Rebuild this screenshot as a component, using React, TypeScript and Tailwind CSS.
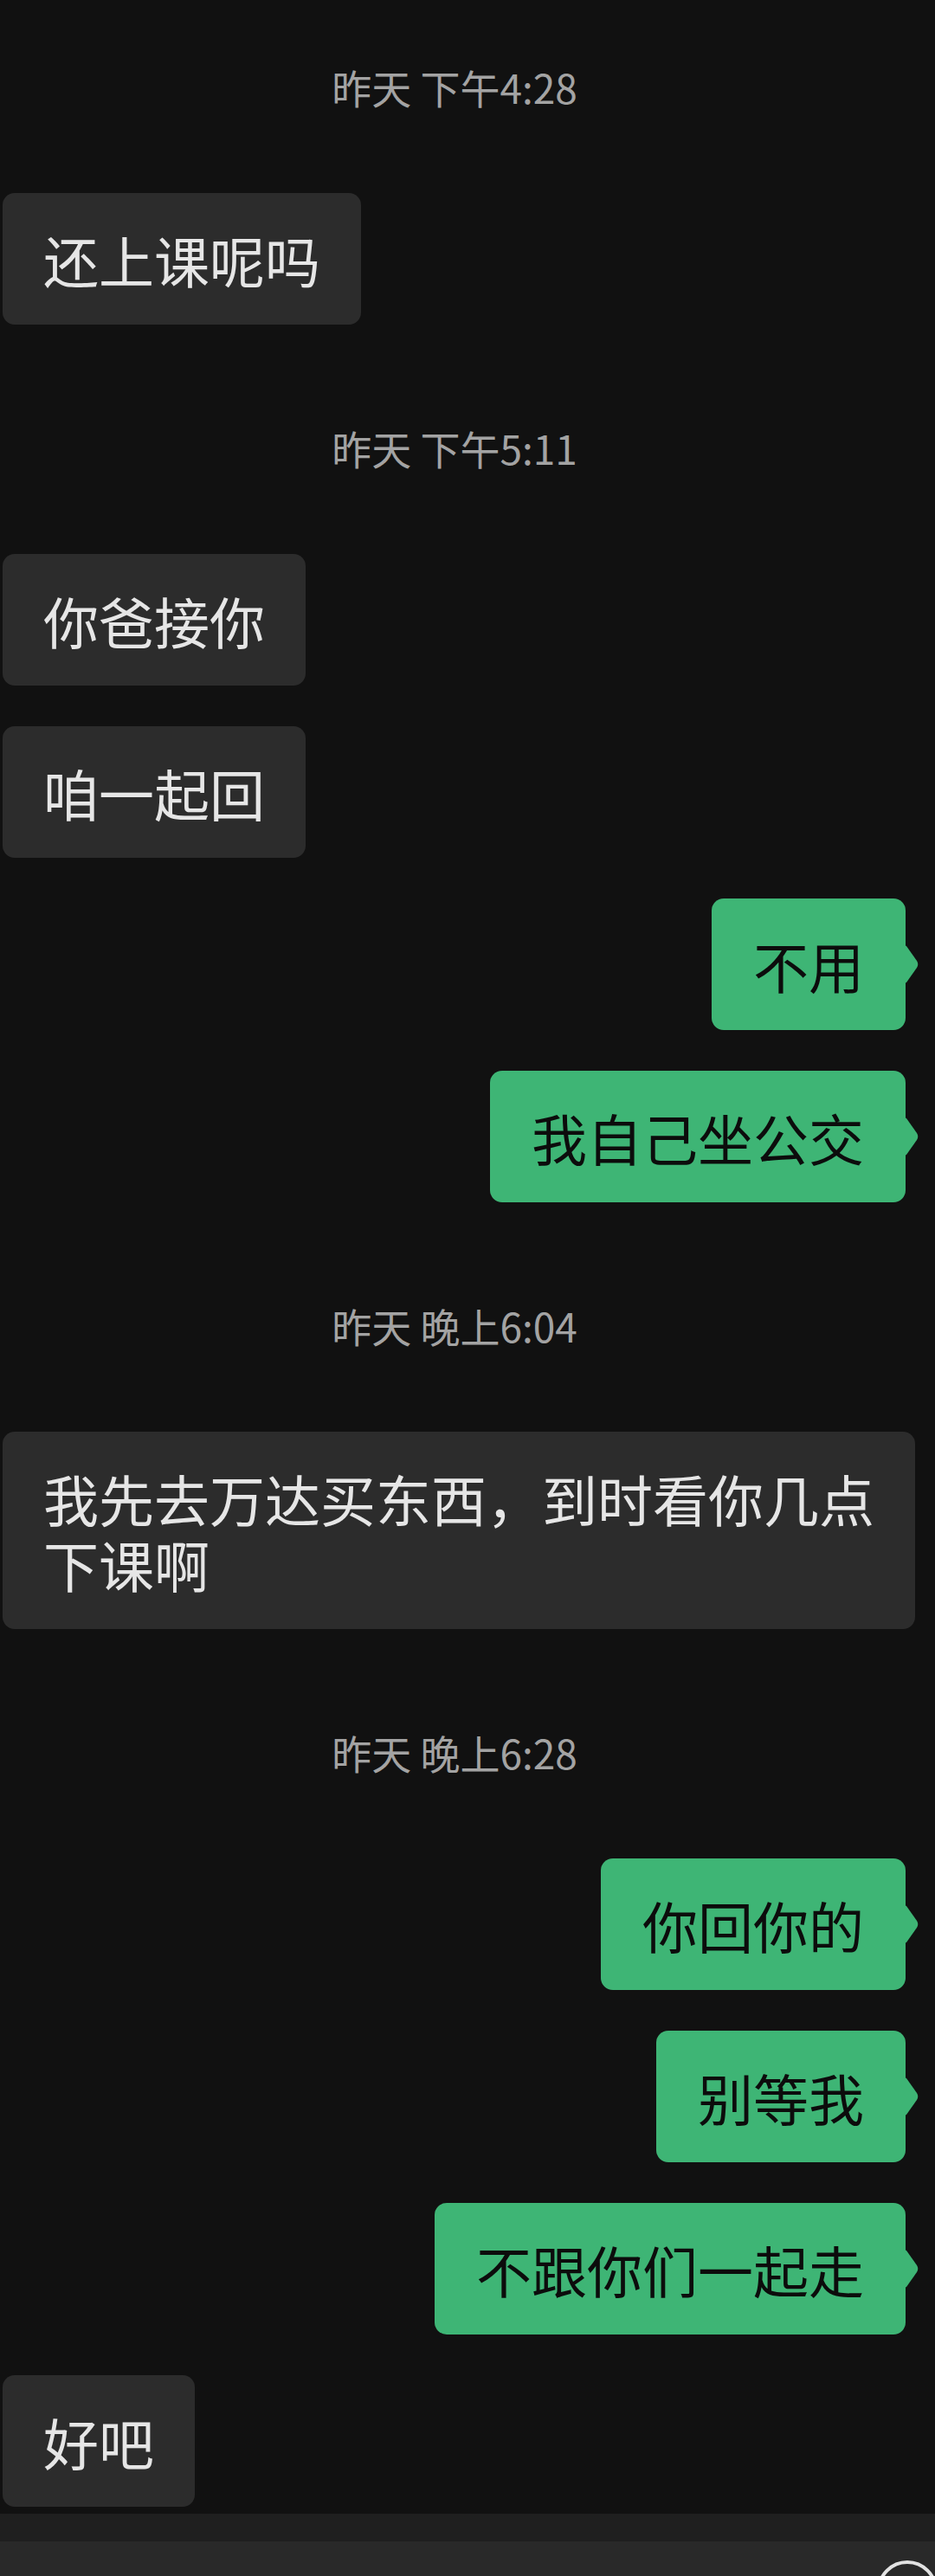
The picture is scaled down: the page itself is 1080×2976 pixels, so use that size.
import React from 'react';

type Item =
  | { kind: 'time'; text: string; first?: boolean }
  | { kind: 'in'; text: string; first?: boolean }
  | { kind: 'out'; text: string; first?: boolean };

const items: Item[] = [
  { kind: 'time', text: '昨天 下午4:28', first: true },
  { kind: 'in', text: '还上课呢吗', first: true },
  { kind: 'time', text: '昨天 下午5:11' },
  { kind: 'in', text: '你爸接你', first: true },
  { kind: 'in', text: '咱一起回' },
  { kind: 'out', text: '不用' },
  { kind: 'out', text: '我自己坐公交' },
  { kind: 'time', text: '昨天 晚上6:04' },
  { kind: 'in', text: '我先去万达买东西，到时看你几点下课啊', first: true },
  { kind: 'time', text: '昨天 晚上6:28' },
  { kind: 'out', text: '你回你的', first: true },
  { kind: 'out', text: '别等我' },
  { kind: 'out', text: '不跟你们一起走' },
  { kind: 'in', text: '好吧' },
];

const Tail = () => (
  <svg
    className="absolute right-[-16px] top-1/2 -translate-y-1/2"
    width="17"
    height="44"
    viewBox="0 0 17 44"
  >
    <path d="M0 0 L2 1 L14 18 Q16.5 22 14 26 L2 43 L0 44 Z" fill="#3eb575" />
  </svg>
);

const TimeStamp = ({ text, first }: { text: string; first?: boolean }) => (
  <div
    className={
      (first ? 'mt-0 ' : 'mt-[112px] ') +
      'mb-[93px] h-[60px] pr-[30px] text-center text-[46px] leading-[60px] text-[#a3a3a3]'
    }
  >
    {text}
  </div>
);

const Incoming = ({ text, first }: { text: string; first?: boolean }) => (
  <div className={(first ? '' : 'mt-[47px] ') + 'flex justify-start pl-[3px]'}>
    <div className="max-w-[1054px] rounded-[14px] bg-[#2c2c2c] px-[47px] py-[38px] text-[64px] leading-[76px] text-[#e6e6e6]">
      {text}
    </div>
  </div>
);

const Outgoing = ({ text, first }: { text: string; first?: boolean }) => (
  <div className={(first ? '' : 'mt-[47px] ') + 'flex justify-end pr-[34px]'}>
    <div className="relative max-w-[900px] rounded-[14px] bg-[#3eb575] px-[48px] py-[38px] text-[64px] leading-[76px] text-[#0c0c0c]">
      {text}
      <Tail />
    </div>
  </div>
);

export default function App() {
  return (
    <div className="flex h-[2976px] w-[1080px] flex-col overflow-hidden bg-[#111111] font-['Noto_Sans_CJK_SC','Noto_Sans',sans-serif]">
      <div className="flex flex-col pt-[70px]">
        {items.map((it, i) => {
          if (it.kind === 'time') return <TimeStamp key={i} text={it.text} first={it.first} />;
          if (it.kind === 'in') return <Incoming key={i} text={it.text} first={it.first} />;
          return <Outgoing key={i} text={it.text} first={it.first} />;
        })}
      </div>

      {/* input area at the bottom, mostly cut off */}
      <div className="mt-[8px] h-[32px] bg-[#1f1f1f]" />
      <div className="relative flex-1 bg-[#292929]">
        <div className="absolute left-[1013px] top-[22px] h-[70px] w-[70px] rounded-full border-[4px] border-[#e2e2e2]" />
      </div>
    </div>
  );
}
